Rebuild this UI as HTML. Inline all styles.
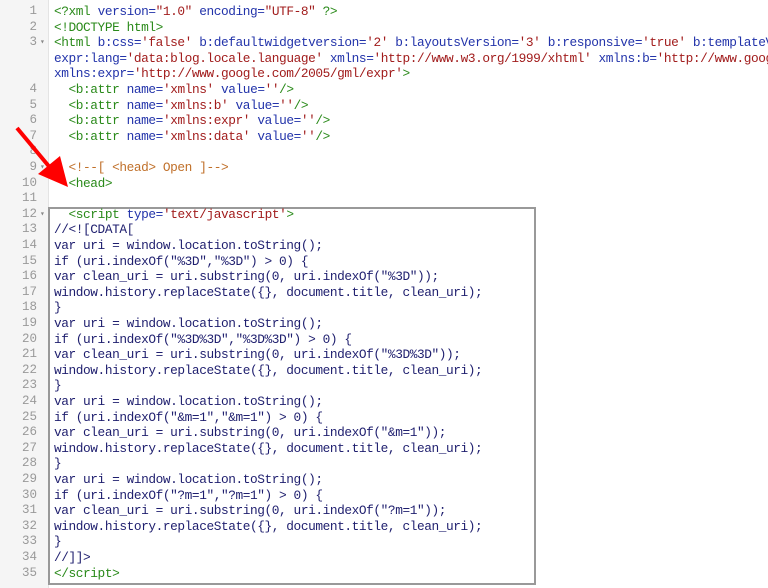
<!DOCTYPE html>
<html><head><style>
body{margin:0;width:768px;height:588px;overflow:hidden;background:#fff;position:relative;font-family:"Liberation Mono",monospace;}
.g{position:absolute;left:0;top:0;width:48px;height:588px;background:#f5f5f5;border-right:1px solid #e4e4e4;}
.row{position:absolute;left:0;width:768px;overflow:hidden;height:15.6px;line-height:15.6px;font-size:12.8px;white-space:pre;}
.n{position:absolute;left:0;width:37px;text-align:right;color:#999;font-size:12.5px;}
.f{position:absolute;left:40px;color:#888;font-size:8px;}
.c{position:absolute;left:54px;color:#1e1e6e;letter-spacing:-0.42px;}
.t{color:#2a8a1a}.a{color:#2233aa}.s{color:#a11c1c}.m{color:#c0702a}
.box{position:absolute;left:48px;top:207px;width:484px;height:374px;border:2px solid #999;}
</style></head><body>
<div class="g"></div>
<div class="box"></div>
<div id="L"></div>
<svg style="position:absolute;left:0;top:0" width="100" height="200"><line x1="17" y1="128" x2="52" y2="170" stroke="#f00" stroke-width="4"/><polygon points="68,187 60,156 38,174" fill="#f00"/></svg>
<script>
const t=s=>'<span class="t">'+s+'</span>',a=s=>'<span class="a">'+s+'</span>',s=x=>'<span class="s">'+x+'</span>',m=x=>'<span class="m">'+x+'</span>';
const E=x=>x.replace(/&/g,'&amp;').replace(/</g,'&lt;').replace(/>/g,'&gt;');
const rows=[
['1','',t(E('<?xml '))+a('version=')+s('"1.0"')+' '+a('encoding=')+s('"UTF-8"')+t(' ?&gt;')],
['2','',t(E('<!DOCTYPE html>'))],
['3','▾',t('&lt;html ')+a('b:css=')+s("'false'")+' '+a('b:defaultwidgetversion=')+s("'2'")+' '+a('b:layoutsVersion=')+s("'3'")+' '+a('b:responsive=')+s("'true'")+' '+a('b:templateVersion=')],
['','',a('expr:lang=')+s("'data:blog.locale.language'")+' '+a('xmlns=')+s("'http://www.w3.org/1999/xhtml'")+' '+a('xmlns:b=')+s("'http://www.google.com/2005/gml/b'")],
['','',a('xmlns:expr=')+s("'http://www.google.com/2005/gml/expr'")+t('&gt;')],
['4','','  '+t('&lt;b:attr')+' '+a('name=')+s("'xmlns'")+' '+a('value=')+s("''")+t('/&gt;')],
['5','','  '+t('&lt;b:attr')+' '+a('name=')+s("'xmlns:b'")+' '+a('value=')+s("''")+t('/&gt;')],
['6','','  '+t('&lt;b:attr')+' '+a('name=')+s("'xmlns:expr'")+' '+a('value=')+s("''")+t('/&gt;')],
['7','','  '+t('&lt;b:attr')+' '+a('name=')+s("'xmlns:data'")+' '+a('value=')+s("''")+t('/&gt;')],
['8','',''],
['9','▾','  '+m(E('<!--[ <head> Open ]-->'))],
['10','','  '+t('&lt;head&gt;')],
['11','',''],
['12','▾','  '+t('&lt;script')+' '+a('type=')+s("'text/javascript'")+t('&gt;')],
['13','',E('//<![CDATA[')],
];
const js=[
'var uri = window.location.toString();','if (uri.indexOf("%3D","%3D") > 0) {','var clean_uri = uri.substring(0, uri.indexOf("%3D"));','window.history.replaceState({}, document.title, clean_uri);','}',
'var uri = window.location.toString();','if (uri.indexOf("%3D%3D","%3D%3D") > 0) {','var clean_uri = uri.substring(0, uri.indexOf("%3D%3D"));','window.history.replaceState({}, document.title, clean_uri);','}',
'var uri = window.location.toString();','if (uri.indexOf("&m=1","&m=1") > 0) {','var clean_uri = uri.substring(0, uri.indexOf("&m=1"));','window.history.replaceState({}, document.title, clean_uri);','}',
'var uri = window.location.toString();','if (uri.indexOf("?m=1","?m=1") > 0) {','var clean_uri = uri.substring(0, uri.indexOf("?m=1"));','window.history.replaceState({}, document.title, clean_uri);','}',
'//]]>'];
js.forEach((l,i)=>rows.push([String(14+i),'',E(l)]));
rows.push(['35','',t('&lt;/script&gt;')]);
let h='';rows.forEach((r,i)=>{h+='<div class="row" style="top:'+(4+i*15.6)+'px"><span class="n">'+r[0]+'</span><span class="f">'+r[1]+'</span><span class="c">'+r[2]+'</span></div>';});
document.getElementById('L').innerHTML=h;
</script>
</body></html>
